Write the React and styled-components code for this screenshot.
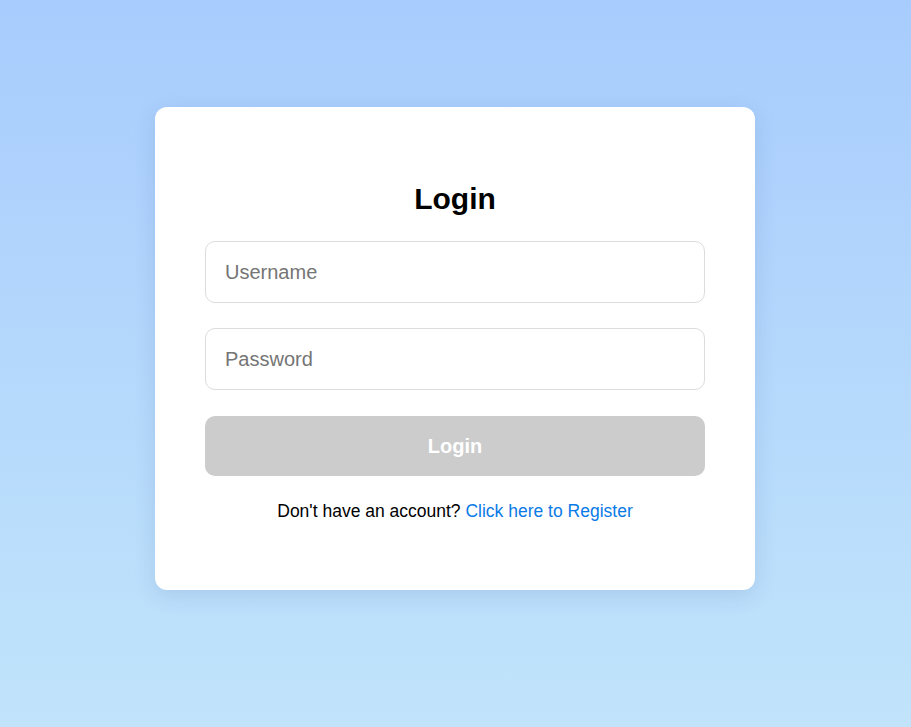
import React from "react";
import styled, { createGlobalStyle } from "styled-components";

const GlobalStyle = createGlobalStyle`
  html, body { margin: 0; padding: 0; height: 100%; }
  body {
    font-family: "Liberation Sans", Arial, sans-serif;
    background: linear-gradient(to bottom, #a8ccfd 0%, #c1e4fb 100%);
    background-attachment: fixed;
    min-height: 100vh;
  }
  * { box-sizing: border-box; }
`;

const Page = styled.div`
  min-height: 100vh;
  display: flex;
  justify-content: center;
  align-items: flex-start;
  padding: 107px 1px 0 0;
`;

const Card = styled.form`
  width: 600px;
  background: #ffffff;
  border-radius: 12px;
  box-shadow: 0 6px 22px rgba(40, 80, 140, 0.14);
  padding: 75px 50px 69px;
  display: flex;
  flex-direction: column;
`;

const Title = styled.h2`
  margin: 0 0 25px;
  font-size: 30px;
  line-height: 34px;
  font-weight: 700;
  text-align: center;
  color: #000;
`;

const Input = styled.input`
  height: 62px;
  width: 100%;
  padding: 0 19px;
  margin-bottom: 25px;
  border: 1px solid #dcdcdc;
  border-radius: 10px;
  font-family: "Liberation Sans", Arial, sans-serif;
  font-size: 20px;
  color: #222;
  background: #fff;
  outline: none;
  &::placeholder { color: #757575; }
`;

const Button = styled.button`
  height: 60px;
  width: 100%;
  margin-top: 1px;
  border: none;
  border-radius: 10px;
  background: #cccccc;
  color: #ffffff;
  font-family: "Liberation Sans", Arial, sans-serif;
  font-size: 20px;
  font-weight: 700;
  cursor: not-allowed;
`;

const Footer = styled.p`
  margin: 25px 0 0;
  text-align: center;
  font-size: 17.5px;
  line-height: 20px;
  color: #000;
`;

const Link = styled.a`
  color: #0a7ae6;
  text-decoration: none;
`;

export default function App() {
  return (
    <>
      <GlobalStyle />
      <Page>
        <Card onSubmit={(e) => e.preventDefault()}>
          <Title>Login</Title>
          <Input type="text" placeholder="Username" />
          <Input type="password" placeholder="Password" />
          <Button type="submit" disabled>Login</Button>
          <Footer>
            Don't have an account? <Link href="#">Click here to Register</Link>
          </Footer>
        </Card>
      </Page>
    </>
  );
}
